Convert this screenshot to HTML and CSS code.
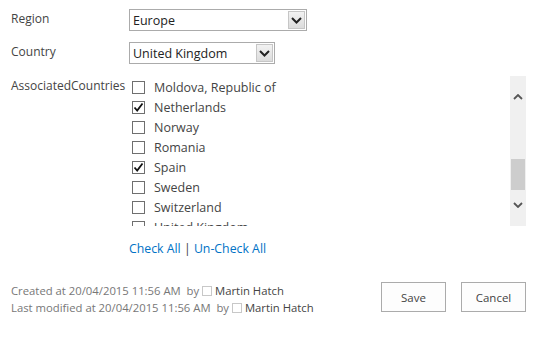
FILE: index.html
```html
<!DOCTYPE html>
<html>
<head>
<meta charset="utf-8">
<link rel="stylesheet" href="styles.css">
</head>
<body>
<div class="form">
  <div class="row row-region">
    <div class="label">Region</div>
    <div class="select select-region">
      <span class="select-value">Europe</span>
      <span class="select-btn"><svg width="11" height="7" viewBox="0 0 11 7"><path d="M1 1 L5.5 5.5 L10 1" fill="none" stroke="#222" stroke-width="2"/></svg></span>
    </div>
  </div>
  <div class="row row-country">
    <div class="label">Country</div>
    <div class="select select-country">
      <span class="select-value">United Kingdom</span>
      <span class="select-btn"><svg width="11" height="7" viewBox="0 0 11 7"><path d="M1 1 L5.5 5.5 L10 1" fill="none" stroke="#222" stroke-width="2"/></svg></span>
    </div>
  </div>
  <div class="row row-assoc">
    <div class="label">AssociatedCountries</div>
    <div class="assoc">
      <div class="list">
        <div class="items">
          <div class="item"><span class="cb"></span><span>Moldova, Republic of</span></div>
          <div class="item"><span class="cb checked"><svg width="11" height="11" viewBox="0 0 11 11"><path d="M1.5 5.5 L4.2 8.5 L9.5 1.5" fill="none" stroke="#111" stroke-width="1.8"/></svg></span><span>Netherlands</span></div>
          <div class="item"><span class="cb"></span><span>Norway</span></div>
          <div class="item"><span class="cb"></span><span>Romania</span></div>
          <div class="item"><span class="cb checked"><svg width="11" height="11" viewBox="0 0 11 11"><path d="M1.5 5.5 L4.2 8.5 L9.5 1.5" fill="none" stroke="#111" stroke-width="1.8"/></svg></span><span>Spain</span></div>
          <div class="item"><span class="cb"></span><span>Sweden</span></div>
          <div class="item"><span class="cb"></span><span>Switzerland</span></div>
          <div class="item"><span class="cb"></span><span>United Kingdom</span></div>
        </div>
        <div class="scrollbar">
          <div class="sb-arrow"><svg width="10" height="6" viewBox="0 0 10 6"><path d="M1 5 L5 1 L9 5" fill="none" stroke="#555" stroke-width="1.8"/></svg></div>
          <div class="sb-track"><div class="sb-thumb"></div></div>
          <div class="sb-arrow"><svg width="10" height="6" viewBox="0 0 10 6"><path d="M1 1 L5 5 L9 1" fill="none" stroke="#555" stroke-width="1.8"/></svg></div>
        </div>
      </div>
      <div class="links"><a class="link">Check All</a> <span class="sep">|</span> <a class="link">Un-Check All</a></div>
    </div>
  </div>
  <div class="footer">
    <div class="meta">
      <div class="meta-line">Created at 20/04/2015 11:56 AM&nbsp; by <span class="presence"></span> <span class="user">Martin Hatch</span></div>
      <div class="meta-line">Last modified at 20/04/2015 11:56 AM&nbsp; by <span class="presence"></span> <span class="user">Martin Hatch</span></div>
    </div>
    <div class="buttons">
      <button class="btn">Save</button>
      <button class="btn">Cancel</button>
    </div>
  </div>
</div>
</body>
</html>
```
FILE: styles.css
```css
html, body {
  margin: 0;
  padding: 0;
  background: #fff;
}
body {
  font-family: "Open Sans", "Noto Sans", sans-serif;
  color: #444;
  font-size: 13px;
}
.form {
  width: 515px;
  padding: 9px 0 0 11px;
}
.row {
  display: flex;
  align-items: flex-start;
}
.label {
  width: 118px;
  font-size: 12px;
  color: #444;
  line-height: 18px;
}
.row-region { margin-bottom: 11px; }
.row-region .label { margin-top: 1px; }
.row-country { margin-bottom: 12px; }
.row-country .label { margin-top: 1px; }
.row-assoc .label { margin-top: 1px; }
.select {
  box-sizing: border-box;
  height: 22px;
  border: 1px solid #ababab;
  display: flex;
  align-items: stretch;
  justify-content: space-between;
  background: #fff;
}
.select-region { width: 178px; }
.select-country { width: 146px; }
.select-value {
  padding-left: 3px;
  font-size: 12.5px;
  line-height: 21px;
  color: #222;
}
.select-btn {
  width: 17px;
  margin: 1px;
  background: linear-gradient(#f2f2f2, #dcdcdc);
  border: 1px solid #c6c6c6;
  box-sizing: border-box;
  display: flex;
  align-items: center;
  justify-content: center;
}
.assoc {
  width: 397px;
}
.list {
  height: 150px;
  display: flex;
  overflow: hidden;
}
.items {
  flex: 1;
  padding: 1px 0 0 3px;
}
.item {
  display: flex;
  align-items: center;
  height: 20px;
  font-size: 12.5px;
  color: #444;
}
.cb {
  box-sizing: border-box;
  width: 13px;
  height: 13px;
  border: 1px solid #6f6f6f;
  margin-right: 9px;
  display: flex;
  align-items: center;
  justify-content: center;
  background: #fff;
}
.scrollbar {
  width: 16px;
  background: #f0f0f0;
  display: flex;
  flex-direction: column;
}
.sb-arrow {
  height: 42px;
  display: flex;
  align-items: center;
  justify-content: center;
}
.sb-track {
  flex: 1;
  position: relative;
}
.sb-thumb {
  position: absolute;
  left: 1px;
  right: 1px;
  top: 41px;
  height: 31px;
  background: #cdcdcd;
}
.links {
  margin-top: 14px;
  font-size: 12.3px;
  line-height: 18px;
}
.link {
  color: #0072c6;
  text-decoration: none;
}
.sep { color: #444; }
.footer {
  margin-top: 24px;
  display: flex;
  justify-content: space-between;
  align-items: flex-start;
}
.meta {
  margin-top: 0;
  font-size: 11.3px;
  color: #777;
  line-height: 17px;
}
.presence {
  display: inline-block;
  width: 8px;
  height: 8px;
  border: 1px solid #c8c8c8;
  vertical-align: -1px;
}
.user { color: #444; }
.buttons {
  display: flex;
  gap: 15px;
}
.btn {
  width: 65px;
  height: 30px;
  border: 1px solid #ababab;
  background: #fdfdfd;
  font-family: inherit;
  font-size: 11.5px;
  color: #444;
  padding: 0;
}
```
